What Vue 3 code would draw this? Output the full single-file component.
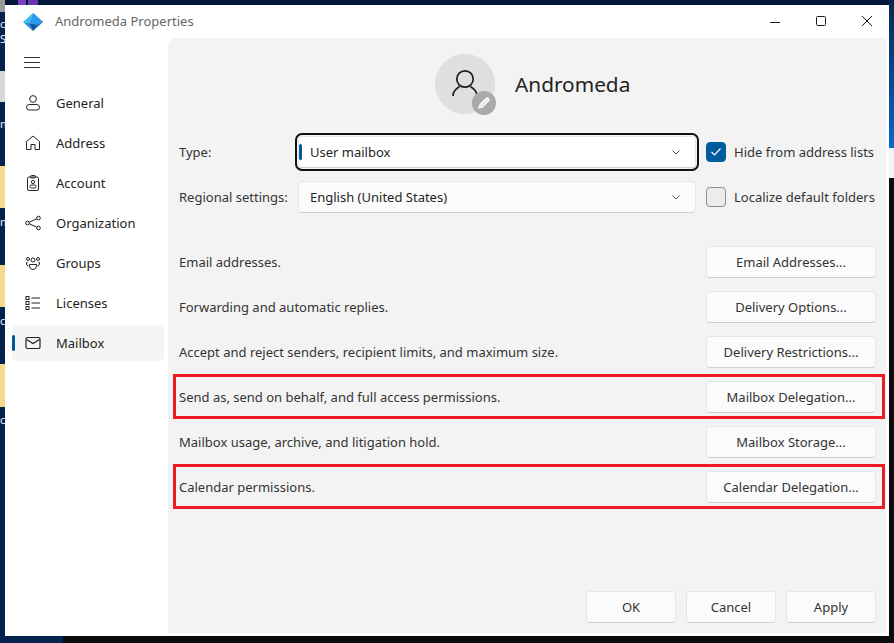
<script setup>
const nav = [
  { label: 'General', icon: 'general' },
  { label: 'Address', icon: 'address' },
  { label: 'Account', icon: 'account' },
  { label: 'Organization', icon: 'org' },
  { label: 'Groups', icon: 'groups' },
  { label: 'Licenses', icon: 'licenses' },
  { label: 'Mailbox', icon: 'mailbox', active: true }
]
const rows = [
  { text: 'Email addresses.', btn: 'Email Addresses...' },
  { text: 'Forwarding and automatic replies.', btn: 'Delivery Options...' },
  { text: 'Accept and reject senders, recipient limits, and maximum size.', btn: 'Delivery Restrictions...' },
  { text: 'Send as, send on behalf, and full access permissions.', btn: 'Mailbox Delegation...', mark: true },
  { text: 'Mailbox usage, archive, and litigation hold.', btn: 'Mailbox Storage...' },
  { text: 'Calendar permissions.', btn: 'Calendar Delegation...', mark: true }
]
const bits = [
  { c: 'c', top: 18 },
  { c: 'S', top: 33 },
  { c: 'n', top: 118 },
  { c: 'n', top: 216 },
  { c: 'c', top: 315 },
  { c: 'c', top: 414 }
]
</script>

<template>
  <div class="desktop">
    <span class="peek p1" />
    <span class="peek p2" />
    <span v-for="b in bits" :key="b.top" class="bit" :style="{ top: b.top + 'px' }">{{ b.c }}</span>
    <div class="window">
      <header class="titlebar">
        <svg class="logo" width="20" height="18" viewBox="0 0 20 18">
          <path d="M10 0 L20 9 L10 18 Z" fill="#1a6fc4" />
          <path d="M10 0 L0 9 L6 10 Z" fill="#3bbcf2" />
          <path d="M0 9 L10 18 L6 10 Z" fill="#1f8ee0" />
          <path d="M10 0 L6 10 L13 12 L20 9 Z" fill="#2a9be8" />
          <path d="M6 10 L10 18 L13 12 Z" fill="#10509f" />
        </svg>
        <span class="title">Andromeda Properties</span>
        <div class="controls">
          <svg width="12" height="12" viewBox="0 0 12 12"><path d="M1 7.5H11" stroke="#1a1a1a" fill="none" /></svg>
          <svg width="12" height="12" viewBox="0 0 12 12"><rect x="1.5" y="1.5" width="9" height="9" rx="1" stroke="#1a1a1a" fill="none" /></svg>
          <svg width="12" height="12" viewBox="0 0 12 12"><path d="M1 1L11 11M11 1L1 11" stroke="#1a1a1a" fill="none" /></svg>
        </div>
      </header>
      <div class="body">
        <aside class="rail">
          <svg class="burger" width="16" height="12" viewBox="0 0 16 12"><path d="M0 1.5H16M0 6.5H16M0 11.5H16" stroke="#333" fill="none" /></svg>
          <nav class="nav">
            <div v-for="n in nav" :key="n.label" class="nav-item" :class="{ active: n.active }">
              <span class="pill" />
              <svg class="nav-icon" width="16" height="16" viewBox="0 0 16 16" fill="none" stroke="#222" stroke-width="1">
                <g v-if="n.icon === 'general'"><circle cx="8" cy="4" r="3.4" /><rect x="1.5" y="9.5" width="13" height="5.5" rx="2.75" /></g>
                <path v-else-if="n.icon === 'address'" d="M1.5 14.5V6.5L8 1L14.5 6.5V14.5H10V9.5H6V14.5Z" stroke-linejoin="round" />
                <g v-else-if="n.icon === 'account'"><rect x="2.5" y="2" width="11" height="13.5" rx="1.5" /><rect x="5.5" y="0.5" width="5" height="2.5" rx="1" /><circle cx="8" cy="7" r="1.6" /><rect x="5" y="10" width="6" height="3" rx="1.2" /></g>
                <g v-else-if="n.icon === 'org'"><circle cx="2.5" cy="8" r="1.8" /><circle cx="13.5" cy="3" r="1.8" /><circle cx="13.5" cy="13" r="1.8" /><path d="M4.2 7.2L11.8 3.8M4.2 8.8L11.8 12.2" /></g>
                <g v-else-if="n.icon === 'groups'"><circle cx="8" cy="5" r="2" /><circle cx="3" cy="4" r="1.5" /><circle cx="13" cy="4" r="1.5" /><path d="M4.5 9.5H11.5V11A3.5 3.5 0 0 1 4.5 11Z" /><path d="M2.5 7.5H1.5V9A2.5 2.5 0 0 0 3.5 11M13.5 7.5H14.5V9A2.5 2.5 0 0 1 12.5 11" /></g>
                <g v-else-if="n.icon === 'licenses'"><rect x="1" y="1.5" width="3" height="3" /><rect x="1" y="6.5" width="3" height="3" /><rect x="1" y="11.5" width="3" height="3" /><path d="M6.5 3H15M6.5 8H15M6.5 13H15" /></g>
                <g v-else stroke-width="1.2"><rect x="1" y="2.5" width="14" height="11" rx="1.5" /><path d="M1.5 4.5L8 8.5L14.5 4.5" /></g>
              </svg>
              <span class="nav-label">{{ n.label }}</span>
            </div>
          </nav>
        </aside>
        <main class="pane">
          <section class="identity">
            <div class="avatar">
              <svg width="28" height="30" viewBox="0 0 28 30" fill="none" stroke="#1c1c1c" stroke-width="1.7">
                <circle cx="14" cy="10" r="8.2" />
                <path d="M2 27C2 22 5 20 8.5 17.5M26 27C26 22 23 20 19.5 17.5" />
              </svg>
              <span class="edit">
                <svg width="14" height="14" viewBox="0 0 14 14" fill="#e8e8e8" stroke="#fff" stroke-width="1.1"><path d="M2 12L3 8.5L9.5 2C10.5 1.2 12.8 3.3 12 4.5L5.5 11Z" /></svg>
              </span>
            </div>
            <span class="name">Andromeda</span>
          </section>

          <section class="form">
            <label class="lbl">Type:</label>
            <div class="select focus">
              <span class="caret" />
              <span>User mailbox</span>
              <svg class="chev" width="8" height="5" viewBox="0 0 8 5"><path d="M0.5 0.5L4 4L7.5 0.5" stroke="#555" fill="none" /></svg>
            </div>
            <div class="check on">
              <span class="box"><svg width="12" height="10" viewBox="0 0 12 10"><path d="M1.5 5L4.5 8L10.5 1.5" stroke="#fff" stroke-width="1.2" fill="none" /></svg></span>
              <span>Hide from address lists</span>
            </div>
            <label class="lbl">Regional settings:</label>
            <div class="select">
              <span>English (United States)</span>
              <svg class="chev" width="8" height="5" viewBox="0 0 8 5"><path d="M0.5 0.5L4 4L7.5 0.5" stroke="#555" fill="none" /></svg>
            </div>
            <div class="check">
              <span class="box" />
              <span>Localize default folders</span>
            </div>
          </section>

          <section class="rows">
            <div v-for="r in rows" :key="r.btn" class="row" :class="{ mark: r.mark }">
              <span>{{ r.text }}</span>
              <button class="btn wide">{{ r.btn }}</button>
            </div>
          </section>

          <footer class="actions">
            <button class="btn act">OK</button>
            <button class="btn act">Cancel</button>
            <button class="btn act">Apply</button>
          </footer>
        </main>
      </div>
    </div>
  </div>
</template>

<style>
html, body { margin: 0; background: #0a0a0a; }
</style>

<style scoped>
.desktop {
  position: relative;
  width: 894px;
  height: 643px;
  box-sizing: border-box;
  padding: 5px 5px 7px 5px;
  overflow: hidden;
  background:
    linear-gradient(90deg, #03234f 0 63px, #0b0b0b 63px) bottom / 100% 7px no-repeat,
    linear-gradient(180deg, #04284f 0, #0a66c8 148px, #f4f4f4 148px 178px, #0b0b0b 178px) right / 5px 100% no-repeat,
    linear-gradient(180deg, #9a9a9a 0 12px, #03224e 12px 71px, #d8d8d8 71px 102px, #03224e 102px 166px, #f6d98a 166px 208px, #03224e 208px 265px, #f6d98a 265px 307px, #03224e 307px 364px, #f6d98a 364px 407px, #03224e 407px) left / 5px 100% no-repeat,
    #02193a;
  font-family: "Noto Sans", "Open Sans", sans-serif;
  font-size: 13px;
  color: #1f1f1f;
}
.peek { position: absolute; top: 0; height: 5px; }
.p1 { left: 18px; width: 8px; background: #7a3fc0; }
.p2 { left: 28px; width: 10px; background: #6a35b0; }
.bit {
  position: absolute;
  left: 0;
  color: #eef3fa;
  font-size: 11px;
  line-height: 12px;
}
.window {
  position: relative;
  height: 100%;
  display: flex;
  flex-direction: column;
  background: #fff;
}
.titlebar {
  height: 33px;
  flex: none;
  display: flex;
  align-items: center;
  padding-left: 18px;
}
.title { margin-left: 12px; color: #666; padding-bottom: 2px; }
.controls {
  margin-left: auto;
  display: flex;
  gap: 34px;
  padding-right: 16px;
  padding-bottom: 2px;
}
.body { flex: 1; display: flex; min-height: 0; }
.rail { width: 163px; flex: none; }
.burger { display: block; margin: 18px 0 0 19px; }
.nav {
  margin-top: 17px;
  padding-left: 7px;
  display: flex;
  flex-direction: column;
  gap: 4px;
}
.nav-item {
  height: 36px;
  width: 152px;
  display: flex;
  align-items: center;
  border-radius: 5px;
}
.nav-item.active { background: #f5f5f5; }
.pill { width: 3px; height: 16px; border-radius: 2px; flex: none; background: transparent; }
.active .pill { background: #005a9e; }
.nav-icon { margin-left: 10px; flex: none; }
.nav-label { margin-left: 15px; color: #222; }
.pane {
  flex: 1;
  margin-right: 3px;
  margin-bottom: 3px;
  background: #f3f3f3;
  border-top-left-radius: 8px;
  display: flex;
  flex-direction: column;
  min-width: 0;
}
.identity {
  display: flex;
  align-items: center;
  margin-top: 16px;
  padding-left: 267px;
  height: 60px;
}
.avatar {
  position: relative;
  width: 60px;
  height: 60px;
  border-radius: 50%;
  background: #dfdfdf;
  display: flex;
  align-items: center;
  justify-content: center;
}
.edit {
  position: absolute;
  right: -1px;
  bottom: -1px;
  width: 24px;
  height: 24px;
  border-radius: 50%;
  background: #a9a9a9;
  display: flex;
  align-items: center;
  justify-content: center;
}
.name { margin-left: 20px; font-size: 20.8px; color: #222; }
.form {
  margin-top: 22px;
  padding-left: 11px;
  display: grid;
  grid-template-columns: 119px 398px auto;
  grid-auto-rows: 32px;
  row-gap: 13px;
  align-items: center;
}
.lbl { color: #333; }
.select {
  position: relative;
  height: 32px;
  box-sizing: border-box;
  display: flex;
  align-items: center;
  padding-left: 11px;
  background: #fbfbfb;
  border: 1px solid #e6e6e6;
  border-bottom-color: #d0d0d0;
  border-radius: 4px;
}
.select.focus {
  background: #fff;
  outline: 2px solid #111;
  outline-offset: 1px;
}
.caret {
  position: absolute;
  left: 0;
  top: 7px;
  width: 3px;
  height: 16px;
  border-radius: 2px;
  background: #005a9e;
}
.chev { position: absolute; right: 15px; top: 13px; }
.check {
  display: flex;
  align-items: center;
  gap: 8px;
  margin-left: 10px;
  color: #333;
  white-space: nowrap;
}
.box {
  width: 20px;
  height: 20px;
  box-sizing: border-box;
  border-radius: 4px;
  background: #ececec;
  border: 1px solid #8c8c8c;
  display: flex;
  align-items: center;
  justify-content: center;
}
.on .box { background: #005a9e; border-color: #005a9e; }
.rows { margin-top: 26px; padding-left: 5px; padding-right: 1px; }
.row {
  height: 45px;
  box-sizing: border-box;
  display: flex;
  align-items: center;
  justify-content: space-between;
  padding: 0 6px 0 3px;
  color: #333;
  border: 3px solid transparent;
}
.row.mark { border-color: #ed1c24; }
.btn {
  height: 32px;
  box-sizing: border-box;
  background: #fbfbfb;
  border: 1px solid #e6e6e6;
  border-bottom-color: #cfcfcf;
  border-radius: 4px;
  font: inherit;
  color: #333;
  padding: 0;
}
.wide { width: 170px; }
.actions {
  margin-top: auto;
  margin-bottom: 10px;
  display: flex;
  justify-content: flex-end;
  gap: 10px;
  padding-right: 10px;
}
.act { width: 90px; }
</style>
